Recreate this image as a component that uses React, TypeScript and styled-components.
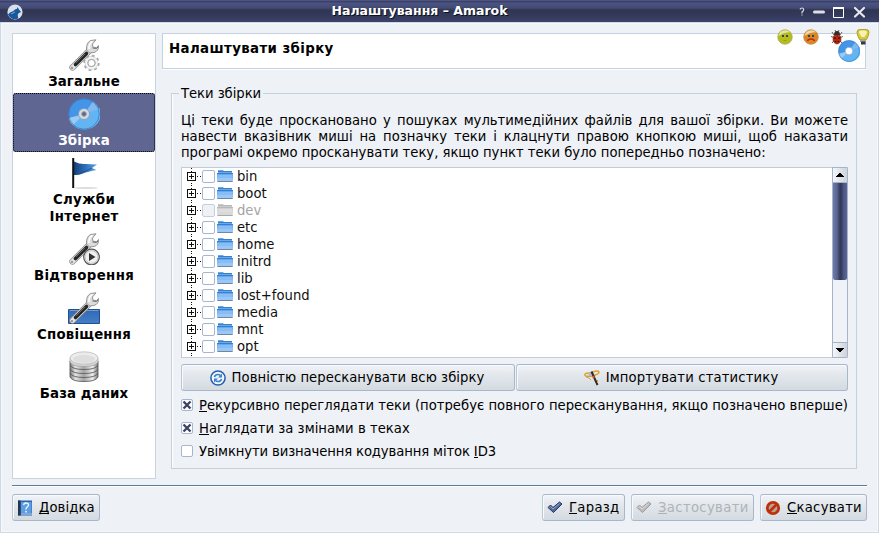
import React from "react";
import styled, { createGlobalStyle, css } from "styled-components";

const Global = createGlobalStyle`
  html, body { margin: 0; padding: 0; }
  body { width: 879px; height: 533px; overflow: hidden; }
  * { box-sizing: border-box; }
  button { font: inherit; color: inherit; margin: 0; }
`;

const Window = styled.div`
  width: 879px;
  height: 533px;
  display: flex;
  flex-direction: column;
  background: #eef1f6;
  color: #000;
  font: 13.2px/17px "DejaVu Sans", sans-serif;
  cursor: default;
`;

const TitleBar = styled.header`
  flex: none;
  height: 22px;
  display: flex;
  align-items: center;
  padding: 2px 13px 0 7px;
  color: #fff;
  background: linear-gradient(#5d6796 0, #3c4169 1px, #3c4169 2px, #4b5482 3px, #434a73 8px, #303552 10px, #33395a 15px, #3c426a 22px);
`;

const AppTitle = styled.h1`
  flex: 1;
  margin: -2px 0 0;
  padding-left: 17px;
  text-align: center;
  font: bold 12.5px/22px "DejaVu Sans", sans-serif;
  text-shadow: 1px 1px 0 #0b101c;
`;

const WindowControls = styled.div`
  display: flex;
  align-items: center;
  height: 22px;
  margin-top: -2px;
`;

const Frame = styled.main`
  flex: 1;
  display: flex;
  flex-direction: column;
  padding: 10px 11px;
  border: 1px solid #cddae5;
  box-shadow: inset 0 0 0 1px #f6f9fc;
`;

const Content = styled.div`
  display: flex;
  height: 446px;
`;

const PageList = styled.nav`
  width: 144px;
  height: 446px;
  margin-right: 6px;
  background: #fff;
  border: 1px solid #c9d3df;
`;

const PageItem = styled.div<{ $selected?: boolean; $tracking?: number }>`
  display: flex;
  flex-direction: column;
  align-items: center;
  gap: 2px;
  padding: 5px 10px 3px;
  font: bold 13.33px/17px "DejaVu Sans", sans-serif;
  letter-spacing: ${(p) => p.$tracking ?? 0.1}px;
  text-align: center;
  svg { display: block; flex: none; }
  ${(p) =>
    p.$selected &&
    css`
      color: #fff;
      background: #5e6691;
      border-radius: 3px;
      outline: 1px dotted #000;
      outline-offset: -1px;
    `}
`;

const PagePane = styled.section`
  width: 705px;
  display: flex;
  flex-direction: column;
`;

const PageHeader = styled.div`
  position: relative;
  height: 36px;
  width: 704px;
  display: flex;
  align-items: center;
  justify-content: space-between;
  padding: 0 5px 0 6px;
  background: #fff;
  border: 1px solid #c3d1e0;
  box-shadow: 0 1px 0 #fff;
`;

const PageTitle = styled.h2`
  margin: 0;
  font: bold 13.33px/17px "DejaVu Sans", sans-serif;
  letter-spacing: 0.4px;
  padding-bottom: 6px;
`;

const FeedbackIcons = styled.div`
  position: absolute;
  right: -6px;
  top: -5px;
  display: flex;
  gap: 10px;
  svg { display: block; }
`;

const Group = styled.fieldset`
  height: 385px;
  width: 686px;
  min-width: 0;
  margin: 15px 0 0 9px;
  padding: 11px 8px 0 9px;
  border: 1px solid #c3d1df;
  box-shadow: inset 1px 0 0 #fff;
`;

const Legend = styled.legend`
  height: 18px;
  line-height: 19px;
  margin: 0 0 0 -2px;
  padding: 0 2px;
  letter-spacing: -0.05px;
`;

const Description = styled.div`
  margin-bottom: 6px;
  line-height: 16px;
`;

const Line = styled.div<{ $justify?: boolean }>`
  height: 16px;
  white-space: nowrap;
  letter-spacing: ${(p) => (p.$justify ? 0 : -0.015)}px;
  text-align-last: ${(p) => (p.$justify ? "justify" : "left")};
`;

const Tree = styled.div`
  display: flex;
  width: 667px;
  height: 191px;
  background: #fff;
  border: 1px solid #c3cbd8;
  border-right: 0;
`;

const TreeRows = styled.div`
  flex: 1;
  overflow: hidden;
`;

const TreeRow = styled.div<{ $disabled?: boolean }>`
  display: flex;
  align-items: center;
  height: 17px;
  padding-left: 5px;
  color: ${(p) => (p.$disabled ? "#a4a4a4" : "#101010")};
  svg { display: block; flex: none; }
`;

const TreeBox = styled.span<{ $disabled?: boolean }>`
  width: 13px;
  height: 13px;
  margin: 0 2px 0 0;
  border: 1px solid ${(p) => (p.$disabled ? "#c3d0dc" : "#a7b6d0")};
  border-radius: 2px;
  background: ${(p) => (p.$disabled ? "#eef1f6" : "#fff")};
`;

const TreeLabel = styled.span`
  margin-left: 4px;
`;

const ScrollBar = styled.div`
  width: 16px;
  margin: -1px 0;
  display: flex;
  flex-direction: column;
  border: 1px solid #a6b3cb;
  border-radius: 0 2px 2px 0;
  background: #eff2f7;
`;

const ScrollButton = styled.div<{ $down?: boolean }>`
  flex: none;
  height: 15px;
  display: flex;
  align-items: center;
  justify-content: center;
  background: linear-gradient(90deg, #f4f6f9, #ccd3da);
  ${(p) => (p.$down ? "border-top: 1px solid #a6b3cb; margin-top: auto;" : "border-bottom: 1px solid #a6b3cb;")}
`;

const ScrollThumb = styled.div`
  height: 97px;
  border-radius: 0 0 2px 2px;
  background: linear-gradient(90deg, #6c7dab 0, #5b6593 4px, #333956 7px, #333956 8px, #50598a 11px, #5b6593 14px);
`;

const raised = css`
  display: flex;
  align-items: center;
  padding: 0;
  white-space: nowrap;
  border: 1px solid #a9b7cd;
  border-left-color: #b9c8d5;
  border-radius: 3px;
  background: linear-gradient(#f1f3f7 0, #e6eaef 30%, #d3dae0 100%);
  box-shadow: inset 1px 1px 0 #f8fafc;
  svg { display: block; flex: none; }
`;

const ActionRow = styled.div`
  display: flex;
  gap: 1px;
  margin: 6px 0 2px;
`;

const ActionButton = styled.button<{ $width: number; $tracking: number }>`
  ${raised}
  justify-content: center;
  width: ${(p) => p.$width}px;
  height: 27px;
  padding-right: 2px;
  gap: 6px;
  letter-spacing: ${(p) => p.$tracking}px;
`;

const CheckRow = styled.label<{ $tracking?: number }>`
  display: flex;
  align-items: center;
  height: 23px;
  gap: 6px;
  white-space: nowrap;
  letter-spacing: ${(p) => p.$tracking ?? 0}px;
  > span:last-child { padding-top: 1px; }
`;

const CheckBox = styled.span`
  width: 12px;
  height: 12px;
  border: 1px solid #a7b6d0;
  border-radius: 2px;
  background: #fff;
  svg { display: block; }
`;

const Separator = styled.hr`
  width: 855px;
  height: 2px;
  margin: 6px 0 7px;
  border: 0;
  border-top: 1px solid #5b7c96;
  background: #fff;
`;

const Footer = styled.footer`
  display: flex;
  gap: 6px;
  width: 855px;
`;

const DialogButton = styled.button<{ $width: number; $disabled?: boolean; $first?: boolean; $tracking?: number }>`
  ${raised}
  width: ${(p) => p.$width}px;
  height: 27px;
  padding-left: 4px;
  gap: 6px;
  margin-right: ${(p) => (p.$first ? "auto" : "0")};
  letter-spacing: ${(p) => p.$tracking ?? 0}px;
  color: ${(p) => (p.$disabled ? "#aeb3b8" : "#000")};
`;

const Key = styled.span`
  border-bottom: 1px solid currentColor;
  display: inline-block;
  height: 15px;
  line-height: 17px;
`;

const Mnemonic = ({ text, at = 0 }: { text: string; at?: number }) => (
  <span>
    {text.slice(0, at)}
    <Key>{text[at]}</Key>
    {text.slice(at + 1)}
  </span>
);

const WolfLogo = () => (
  <svg width="16" height="16" viewBox="0 0 16 16">
    <circle cx="8" cy="8" r="7.6" fill="#d8dfe8" />
    <path d="M1 10.5 3 8.500l3-1.200L8 5.500l2-.8L10.500 3l1.500 2.500L14 8l-2.500 1.300-.8 1.500.5 3.700Q5 16.500 2 12z" fill="#17589c" />
    <path d="M4 10l4-2" stroke="#74a7d8" />
  </svg>
);

const Wrench = () => (
  <>
    <path d="M4.500 28.500 20 13" stroke="#8a8a8a" strokeWidth="6.200" strokeLinecap="round" />
    <path d="M4.500 28.500 20 13" stroke="#e4e4e4" strokeWidth="4.800" strokeLinecap="round" />
    <path d="M7.500 25.500 18.500 14.500" stroke="#252525" strokeWidth="3.600" strokeLinecap="round" />
    <path d="M8 23.800 17 14.800" stroke="#8a8a8a" strokeWidth=".8" />
    <circle cx="4" cy="29" r="1.200" fill="#999" />
    <path d="M18.500 11Q18 4 22.500 1.500L28 .8 24.500 5l.4 3.200 3.600.4L30.500 6.500Q31 12 26 13.500L21.500 14z" fill="#dcdcdc" stroke="#808080" strokeWidth=".8" />
    <path d="M21 10Q20.500 5 24.500 2.500" stroke="#fff" strokeWidth="1.500" fill="none" />
    <path d="M24.500 9l4 .5 1.500-1.500" stroke="#555" strokeWidth=".8" fill="none" />
  </>
);

const GeneralIcon = () => (
  <svg width="32" height="32" viewBox="0 0 32 32" fill="none">
    <Wrench />
    <circle cx="23.500" cy="24" r="6.900" stroke="#a7a7a7" strokeWidth="2.600" strokeDasharray="2.700 2.720" />
    <circle cx="23.500" cy="24" r="5.200" stroke="#c4c4c4" strokeWidth="3" />
    <circle cx="23.500" cy="24" r="5.200" stroke="#f3f3f3" strokeWidth="2.200" />
    <circle cx="23.500" cy="24" r="3.600" fill="#fff" stroke="#888" strokeWidth=".8" />
  </svg>
);

const PlaybackIcon = () => (
  <svg width="32" height="32" viewBox="0 0 32 32" fill="none">
    <Wrench />
    <circle cx="23.500" cy="24" r="7.800" fill="#f0f0f0" stroke="#5a5a5a" strokeWidth="1.300" />
    <circle cx="23.500" cy="24" r="6.400" stroke="#c5c5c5" />
    <path d="M21 20v8l6.500-4z" fill="#333" />
  </svg>
);

const NotifyIcon = () => (
  <svg width="32" height="32" viewBox="0 0 32 32" fill="none">
    <defs>
      <linearGradient id="panel" x2="0" y2="1">
        <stop stopColor="#3168b6" />
        <stop offset="1" stopColor="#427fc8" />
      </linearGradient>
    </defs>
    <path d="M.5 17.500h31v14H.5z" fill="url(#panel)" stroke="#254f88" />
    <path d="M1.500 18.500h29" stroke="#6e9cd3" />
    <Wrench />
  </svg>
);

const DiscIcon = ({ size, hub }: { size: number; hub?: boolean }) => (
  <svg width={size} height={size} viewBox="0 0 32 32">
    <circle cx="16" cy="16" r="15.500" fill="#4495e8" />
    <path d="M16 16 31.500 10A15.500 15.500 0 0 1 16 31.500 15.500 15.500 0 0 1 2.500 24z" fill="#62b5f2" />
    <path d="M16 16 25 3.500A15.500 15.500 0 0 1 31 11z" fill="#84b9ef" />
    <path d="M16 16 .700 20Q1.500 24 5 27z" fill="#9bc9f2" />
    <circle cx="16" cy="16" r="15.200" fill="none" stroke="#3478bd" strokeWidth=".7" />
    <circle cx="16" cy="16" r="5.500" fill={hub ? "#d6dade" : "#fff"} stroke="#789abf" strokeWidth=".8" />
    {hub && <circle cx="16" cy="16" r="2.300" fill="#5e6691" stroke="#8f969f" />}
  </svg>
);

const FlagIcon = () => (
  <svg width="32" height="32" viewBox="0 0 32 32">
    <defs>
      <linearGradient id="flag">
        <stop stopColor="#163f75" />
        <stop offset=".5" stopColor="#2c70bc" />
        <stop offset="1" stopColor="#64a5e2" />
      </linearGradient>
    </defs>
    <ellipse cx="18" cy="31" rx="12" ry="1" fill="#ddd" />
    <path d="M6 4.500Q12 7.500 18 7L29 7.500 24 11 28.500 13Q20 14.500 15 16.500T6 18z" fill="url(#flag)" />
    <path d="M12 16Q20 13.500 24 11" stroke="#174779" strokeWidth=".7" fill="none" />
    <path d="M5.200 1v30" stroke="#111" strokeWidth="2" />
  </svg>
);

const DatabaseIcon = () => (
  <svg width="32" height="32" viewBox="0 0 32 32">
    <defs>
      <linearGradient id="metal">
        <stop stopColor="#777" />
        <stop offset=".2" stopColor="#e3e3e3" />
        <stop offset=".5" stopColor="#a2a2a2" />
        <stop offset=".8" stopColor="#eee" />
        <stop offset="1" stopColor="#777" />
      </linearGradient>
    </defs>
    {[23, 19, 15, 11].map((y) => (
      <path key={y} d={`M2 ${y - 1}v4q2 4.500 14 4.500t14-4.500v-4z`} fill="url(#metal)" stroke="#5f5f5f" strokeWidth=".9" />
    ))}
    <path d="M2 7v4q2 4.500 14 4.500T30 11V7z" fill="#d4d4d4" stroke="#999" strokeWidth=".6" />
    <ellipse cx="16" cy="7" rx="14" ry="6.200" fill="#ececec" stroke="#b5b5b5" strokeWidth=".7" />
    <ellipse cx="16" cy="8" rx="11" ry="4" fill="#dedede" />
  </svg>
);

const FaceIcon = ({ sad }: { sad?: boolean }) => (
  <svg width="16" height="16" viewBox="0 0 16 16" fill="none">
    <circle cx="8" cy="8" r="7.300" fill={sad ? "#df8522" : "#b6bd1b"} stroke={sad ? "#b88a55" : "#aaaa61"} strokeWidth=".7" />
    <path d="M1.500 7Q2.500 1.500 8 1.200q3.500 0 5 2Q6 3.500 1.500 7" fill="#f2e9b0" opacity=".85" />
    <path d="M5 6h2v2H5zM9 6h2v2H9z" fill="#174d82" />
    {sad ? <path d="M4.500 12q.5-2 3.500-2t3.500 2" stroke="#b62d12" strokeWidth="1.500" /> : <path d="M6.500 11.500h3" stroke="#99a011" />}
  </svg>
);

const BugIcon = () => (
  <svg width="16" height="16" viewBox="0 0 16 16" fill="none">
    <path d="M3 3l2 3M13 3l-2 3M2 7.500l3 1M14 7.500l-3 1M3 14l2.500-3M13 14l-2.500-3M6 1l1 2M10 1 9 3" stroke="#666" />
    <ellipse cx="8" cy="10" rx="4" ry="5" fill="#c92c12" stroke="#701708" strokeWidth=".6" />
    <path d="M5 6q0-4 3-4t3 4z" fill="#30302f" />
    <path d="M8 6v9M5.500 8.500h1v1.500h-1zM9.500 8.500h1v1.500h-1zM6 12h1v1H6zM9 12h1v1H9z" stroke="#371008" strokeWidth=".4" fill="#371008" />
  </svg>
);

const BulbIcon = () => (
  <svg width="16" height="16" viewBox="0 0 16 16" fill="none">
    <path d="M4.500 10.500Q2 6 2 3.500 2 .5 4.500 .5h7q2.500 0 2.500 3 0 2.500-2.500 7z" fill="#d5cb36" stroke="#9d951e" strokeWidth=".8" />
    <path d="M4 3.500Q4 1.500 6 1.500h4q2 0 2 2.500L9.500 8h-3z" fill="#f8f0b4" />
    <path d="M5 10.500h6v2.500H5z" fill="#a6a6a6" />
    <path d="M6 12.500h4.500v3H6z" fill="#383838" />
  </svg>
);

const FolderIcon = ({ disabled }: { disabled?: boolean }) => (
  <svg width="16" height="15" viewBox="0 0 16 15">
    <path d="M1 4V1h5l1 1h8v2z" fill={disabled ? "#c9c9c9" : "#69aaeb"} />
    <path d="M0 4h16v1l-.5 8H.5L0 5z" fill={disabled ? "#cfcfcf" : "#65a9ee"} />
    <path d="M1 6h14l-.3 3.500H1.300z" fill={disabled ? "#dedede" : "#8abdf3"} />
    <path d="M1 9h14v3H1z" fill={disabled ? "#d9d9d9" : "#98c8fa"} />
    <path d="M1 2.500h14M0 4.500h16" stroke={disabled ? "#b9b9b9" : "#3a7fcb"} />
    <path d="M.5 12.500h15" stroke={disabled ? "#aaa" : "#73869c"} />
  </svg>
);

const Expander = () => (
  <svg width="15" height="17" viewBox="0 0 15 17" shapeRendering="crispEdges" fill="none" stroke="#111">
    <path d="M4.500 0v17M10 8.500h5" strokeDasharray="1 2" />
    <rect x=".5" y="4.500" width="8" height="8" rx="1" fill="#fff" />
    <path d="M2 8.500h5M4.500 6v5" />
  </svg>
);

const CrossMark = () => (
  <svg width="10" height="10" viewBox="0 0 10 10">
    <path d="M1.500 1.500l7 7M8.500 1.500l-7 7" stroke="#3b4468" strokeWidth="2.400" />
  </svg>
);

const RescanIcon = () => (
  <svg width="16" height="16" viewBox="0 0 16 16" fill="none">
    <circle cx="8" cy="8" r="7.100" fill="#f0f6fc" stroke="#245fa9" strokeWidth="1.500" />
    <path d="M4.500 7q.5-2.500 3.500-2.500 1.500 0 2.500 1M11.500 9Q11 11.500 8 11.500q-1.500 0-2.500-1" stroke="#3983cf" strokeWidth="1.600" />
    <path d="M12 3.500v4H8zM4 12.500v-4h4z" fill="#3983cf" />
  </svg>
);

const WandIcon = () => (
  <svg width="16" height="16" viewBox="0 0 16 16" fill="none">
    <path d="M9 2q5-2 6 0 .5 2-5 3.500Q3 7.500 1 5.500 0 3 5 3" stroke="#dda229" strokeWidth="1.400" />
    <path d="M2 7l3 1 2 2" stroke="#c8a667" />
    <path d="M4.500 2h4v4h-4z" fill="#b9b9b9" />
    <path d="M7.500 1.500 13.500 15" stroke="#2b2b2b" strokeWidth="2" />
    <path d="M9 6l.9 2" stroke="#e55422" strokeWidth="2" />
    <path d="M13.500 10v3" stroke="#dda229" />
  </svg>
);

const HelpIcon = () => (
  <svg width="16" height="16" viewBox="0 0 16 16" fill="none">
    <path d="M1 .5h14v15H1z" fill="#2866b0" />
    <path d="M4 2h10.500v11H4z" fill="#5d9ee3" />
    <path d="M1 .5h2.500v15H1z" fill="#26364c" />
    <path d="M4 14h11" stroke="#d9e9f8" />
    <path d="M6.500 5q.5-2 2.500-2 2.500 0 2.500 2 0 1-1.300 2Q9 8 9 9.500" stroke="#eef6ff" strokeWidth="1.300" />
    <circle cx="9" cy="11.700" r=".9" fill="#eef6ff" />
  </svg>
);

const TickIcon = ({ disabled }: { disabled?: boolean }) => (
  <svg width="16" height="16" viewBox="0 0 16 16">
    <path d="M1 7.500 3.500 5 6 7.500 12.500 2 15 4 6.500 12.500z" fill={disabled ? "#bcbcbc" : "#536899"} stroke={disabled ? "#9b9b9b" : "#28395f"} strokeLinejoin="round" />
    <path d="M2.500 7.500 3.500 6.500l2.500 2.500 6.500-5.500" stroke={disabled ? "#ddd" : "#93a8d0"} fill="none" />
  </svg>
);

const CancelIcon = () => (
  <svg width="16" height="16" viewBox="0 0 16 16">
    <circle cx="8" cy="8" r="5.700" fill="#b8a494" stroke="#bd300d" strokeWidth="2.800" />
    <path d="M4 12 12 4" stroke="#bd300d" strokeWidth="2.600" />
  </svg>
);

const Glyphs = () => (
  <svg width="67" height="22" viewBox="0 0 67 22" fill="none">
    <path d="M1 9.500Q1.500 8 3 8t1.700 1.500Q4.700 11 3 12v1.500M3 14.500v1" stroke="#d8dbe8" strokeWidth="1.200" />
    <path d="M15.500 12h9" stroke="#dedfe3" strokeWidth="3" strokeLinecap="round" />
    <path d="M34.500 7.500h10v10h-10z" stroke="#fff" />
    <path d="M34 8h11" stroke="#fff" strokeWidth="2" />
    <path d="M56 8l9 8.500M65 8l-9 8.500" stroke="#e8e9ee" strokeWidth="2.200" strokeLinecap="round" />
  </svg>
);

const Arrow = ({ down }: { down?: boolean }) => (
  <svg width="8" height="4" viewBox="0 0 8 4" shapeRendering="crispEdges">
    <path d={down ? "M0 0h8v1H7v1H6v1H5v1H3V3H2V2H1V1H0z" : "M0 4h8V3H7V2H6V1H5V0H3v1H2v1H1v1H0z"} />
  </svg>
);

const folders = ["bin", "boot", "dev", "etc", "home", "initrd", "lib", "lost+found", "media", "mnt", "opt"];

const FolderRow = ({ name, disabled }: { name?: string; disabled?: boolean }) => (
  <TreeRow $disabled={disabled}>
    <Expander />
    <TreeBox $disabled={disabled} />
    <FolderIcon disabled={disabled} />
    {name && <TreeLabel>{name}</TreeLabel>}
  </TreeRow>
);

export default function App() {
  return (
    <>
      <Global />
      <Window>
        <TitleBar>
          <WolfLogo />
          <AppTitle>Налаштування – Amarok</AppTitle>
          <WindowControls>
            <Glyphs />
          </WindowControls>
        </TitleBar>
        <Frame>
          <Content>
            <PageList>
              <PageItem><GeneralIcon />Загальне</PageItem>
              <PageItem $selected><DiscIcon size={32} hub />Збірка</PageItem>
              <PageItem $tracking={0.35}><FlagIcon />Служби Інтернет</PageItem>
              <PageItem $tracking={0.35}><PlaybackIcon />Відтворення</PageItem>
              <PageItem $tracking={0.2}><NotifyIcon />Сповіщення</PageItem>
              <PageItem><DatabaseIcon />База даних</PageItem>
            </PageList>
            <PagePane>
              <PageHeader>
                <PageTitle>Налаштувати збірку</PageTitle>
                <DiscIcon size={22} />
                <FeedbackIcons>
                  <FaceIcon />
                  <FaceIcon sad />
                  <BugIcon />
                  <BulbIcon />
                </FeedbackIcons>
              </PageHeader>
              <Group>
                <Legend>Теки збірки</Legend>
                <Description>
                  <Line $justify>Ці теки буде проскановано у пошуках мультимедійних файлів для вашої збірки. Ви можете</Line>
                  <Line $justify>навести вказівник миші на позначку теки і клацнути правою кнопкою миші, щоб наказати</Line>
                  <Line>програмі окремо просканувати теку, якщо пункт теки було попередньо позначено:</Line>
                </Description>
                <Tree>
                  <TreeRows>
                    {folders.map((name) => (
                      <FolderRow key={name} name={name} disabled={name === "dev"} />
                    ))}
                    <FolderRow disabled />
                  </TreeRows>
                  <ScrollBar>
                    <ScrollButton><Arrow /></ScrollButton>
                    <ScrollThumb />
                    <ScrollButton $down><Arrow down /></ScrollButton>
                  </ScrollBar>
                </Tree>
                <ActionRow>
                  <ActionButton $width={334} $tracking={0.06}><RescanIcon />Повністю пересканувати всю збірку</ActionButton>
                  <ActionButton $width={332} $tracking={0.16}><WandIcon />Імпортувати статистику</ActionButton>
                </ActionRow>
                <CheckRow $tracking={0.018}>
                  <CheckBox><CrossMark /></CheckBox>
                  <Mnemonic text="Рекурсивно переглядати теки (потребує повного пересканування, якщо позначено вперше)" />
                </CheckRow>
                <CheckRow $tracking={0.03}>
                  <CheckBox><CrossMark /></CheckBox>
                  <Mnemonic text="Наглядати за змінами в теках" />
                </CheckRow>
                <CheckRow $tracking={-0.12}>
                  <CheckBox />
                  <Mnemonic text="Увімкнути визначення кодування міток ID3" at={37} />
                </CheckRow>
              </Group>
            </PagePane>
          </Content>
          <Separator />
          <Footer>
            <DialogButton $width={88} $first $tracking={0.1}><HelpIcon /><Mnemonic text="Довідка" /></DialogButton>
            <DialogButton $width={83} $tracking={0.3}><TickIcon /><Mnemonic text="Гаразд" /></DialogButton>
            <DialogButton $width={123} $disabled $tracking={0.36}><TickIcon disabled /><Mnemonic text="Застосувати" /></DialogButton>
            <DialogButton $width={107} $tracking={0.28}><CancelIcon /><Mnemonic text="Скасувати" /></DialogButton>
          </Footer>
        </Frame>
      </Window>
    </>
  );
}
